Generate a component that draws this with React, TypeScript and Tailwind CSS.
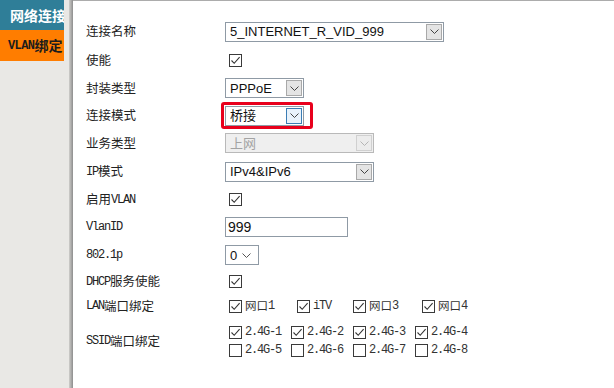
import React from "react";

const cjk = "font-['Noto_Sans_CJK_SC',sans-serif]";
const mono = "font-['Liberation_Mono',monospace] text-[12px] tracking-[-1.2px]";
const ctl = "font-['Liberation_Sans','Noto_Sans_CJK_SC',sans-serif] text-[13px]";

const Chevron = ({ color = "#444" }: { color?: string }) => (
  <svg width="9" height="5" viewBox="0 0 9 5">
    <path d="M0.5 0.5 L4.5 4.5 L8.5 0.5" fill="none" stroke={color} strokeWidth="1" />
  </svg>
);

type SelectProps = {
  value: string;
  width: string;
  variant?: "normal" | "hover" | "disabled" | "plain";
};

const Select = ({ value, width, variant = "normal" }: SelectProps) => {
  const disabled = variant === "disabled";
  return (
    <div
      className={`${width} h-[20px] flex items-stretch border ${ctl} ${
        disabled ? "bg-[#efefef] border-[#b9b9b9] text-[#a3a3a3]" : "bg-white border-[#8f9aa5] text-[#111]"
      }`}
    >
      <span className="flex-1 flex items-center pl-[4px] leading-none whitespace-nowrap overflow-hidden">{value}</span>
      {variant === "plain" ? (
        <span className="w-[16px] flex items-center justify-start">
          <Chevron color="#555" />
        </span>
      ) : (
        <span
          className={`w-[16px] m-[1px] flex items-center justify-center border ${
            variant === "hover"
              ? "bg-[#e8f2fb] border-[#3b7db5]"
              : disabled
              ? "bg-[#ececec] border-[#d0d0d0]"
              : "bg-[#e4e4e4] border-[#a9a9a9]"
          }`}
        >
          <Chevron color={disabled ? "#b5b5b5" : "#444"} />
        </span>
      )}
    </div>
  );
};

const Check = ({ checked }: { checked: boolean }) => (
  <span className="w-[13px] h-[13px] border border-[#3a3a3a] bg-white flex items-center justify-center shrink-0">
    {checked && (
      <svg width="11" height="11" viewBox="0 0 11 11">
        <path d="M1.5 5.5 L4.2 8.3 L9.6 2.2" fill="none" stroke="#333" strokeWidth="1.1" />
      </svg>
    )}
  </span>
);

const CheckItem = ({ checked, width, children }: { checked: boolean; width: string; children: React.ReactNode }) => (
  <div className={`${width} flex items-center gap-[3px] text-[#333]`}>
    <Check checked={checked} />
    <span className="whitespace-nowrap leading-none flex items-center">{children}</span>
  </div>
);

const Row = ({ h, label, children }: { h: string; label: React.ReactNode; children: React.ReactNode }) => (
  <div className={`${h} flex items-center`}>
    <div className={`w-[139px] text-[12.5px] text-[#222] ${cjk} whitespace-nowrap flex items-center`}>{label}</div>
    <div className="flex-1 flex items-center">{children}</div>
  </div>
);

const M = ({ children }: { children: React.ReactNode }) => <span className={mono}>{children}</span>;
const C = ({ children }: { children: React.ReactNode }) => <span className={`${cjk} text-[11.5px]`}>{children}</span>;

export default function App() {
  return (
    <div className="w-[614px] h-[388px] flex overflow-hidden bg-white">
      <aside className="w-[69px] shrink-0 bg-[#e9e8e5] overflow-hidden">
        <div className={`w-[64px] h-[30px] bg-[#2f7e98] text-white font-bold text-[14px] pl-[10px] flex items-center whitespace-nowrap overflow-hidden ${cjk}`}>
          网络连接
        </div>
        <div className={`w-[64px] h-[31px] bg-[#ff7d00] text-[#1c1c1c] font-bold pl-[8px] flex items-center whitespace-nowrap overflow-hidden`}>
          <span className="font-['Liberation_Mono',monospace] text-[12px] tracking-[-0.6px]">VLAN</span>
          <span className={`${cjk} text-[14px]`}>绑定</span>
        </div>
      </aside>
      <div className="w-[4px] shrink-0 bg-linear-to-r from-[#cfcecb] to-[#8e8e8e]" />
      <main className="flex-1 border-t border-[#acacac] pl-[13px] pt-[16px]">
        <Row h="h-[29px]" label="连接名称">
          <Select value="5_INTERNET_R_VID_999" width="w-[219px]" />
        </Row>
        <Row h="h-[28px]" label="使能">
          <span className="ml-[4px]"><Check checked /></span>
        </Row>
        <Row h="h-[28px]" label="封装类型">
          <Select value="PPPoE" width="w-[79px]" />
        </Row>
        <Row h="h-[27px]" label="连接模式">
          <div className="relative">
            <Select value="桥接" width="w-[79px]" variant="hover" />
            <div className="absolute -left-[4px] -top-[4px] w-[92px] h-[27px] border-[3px] border-[#e8001c] rounded-[3px]" />
          </div>
        </Row>
        <Row h="h-[28px]" label="业务类型">
          <Select value="上网" width="w-[149px]" variant="disabled" />
        </Row>
        <Row h="h-[29px]" label={<><M>IP</M>模式</>}>
          <Select value="IPv4&IPv6" width="w-[149px]" />
        </Row>
        <Row h="h-[27px]" label={<>启用<M>VLAN</M></>}>
          <span className="ml-[4px]"><Check checked /></span>
        </Row>
        <Row h="h-[28px]" label={<M>VlanID</M>}>
          <div className={`w-[123px] h-[20px] border border-[#8f9aa5] bg-white flex items-center pl-[2px] text-[#111] ${ctl} text-[14px]`}>
            999
          </div>
        </Row>
        <Row h="h-[28px]" label={<M>802.1p</M>}>
          <Select value="0" width="w-[34px]" variant="plain" />
        </Row>
        <Row h="h-[25px]" label={<><M>DHCP</M>服务使能</>}>
          <span className="ml-[4px]"><Check checked /></span>
        </Row>
        <Row h="h-[24px]" label={<><M>LAN</M>端口绑定</>}>
          <div className="ml-[4px] flex">
            <CheckItem checked width="w-[68px]"><C>网口</C><M>1</M></CheckItem>
            <CheckItem checked width="w-[56px]"><M>iTV</M></CheckItem>
            <CheckItem checked width="w-[69px]"><C>网口</C><M>3</M></CheckItem>
            <CheckItem checked width="w-[60px]"><C>网口</C><M>4</M></CheckItem>
          </div>
        </Row>
        <Row h="h-[46px]" label={<><M>SSID</M>端口绑定</>}>
          <div className="ml-[4px] flex flex-col gap-[5px]">
            <div className="flex">
              {["2.4G-1", "2.4G-2", "2.4G-3", "2.4G-4"].map((s) => (
                <CheckItem key={s} checked width="w-[62px]"><M>{s}</M></CheckItem>
              ))}
            </div>
            <div className="flex">
              {["2.4G-5", "2.4G-6", "2.4G-7", "2.4G-8"].map((s) => (
                <CheckItem key={s} checked={false} width="w-[62px]"><M>{s}</M></CheckItem>
              ))}
            </div>
          </div>
        </Row>
      </main>
    </div>
  );
}
